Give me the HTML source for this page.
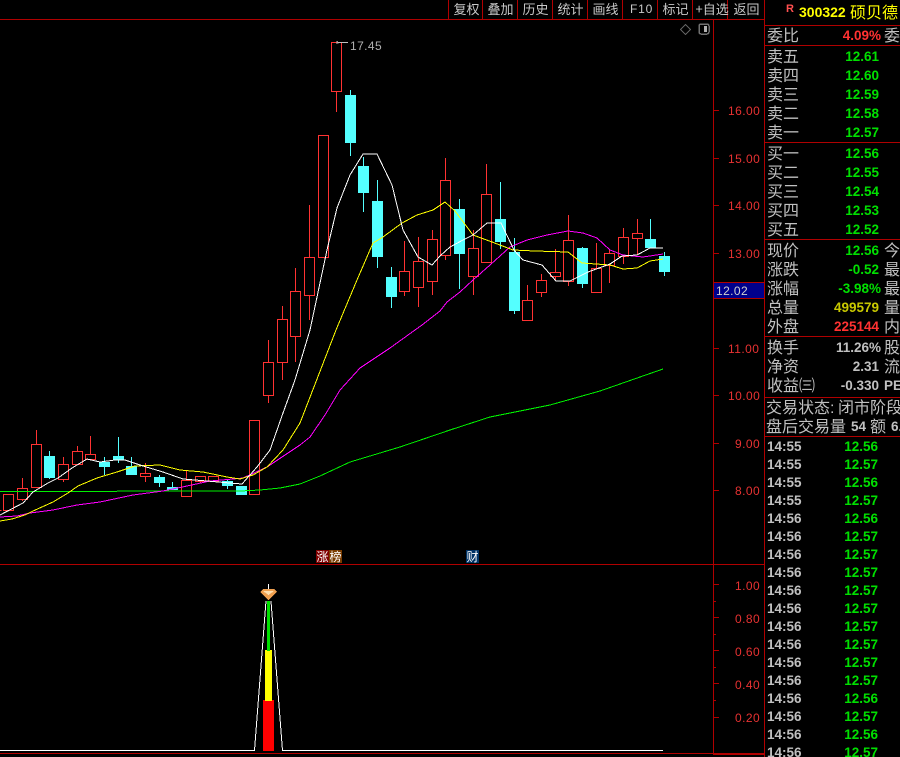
<!DOCTYPE html>
<html><head><meta charset="utf-8"><style>
html,body{margin:0;padding:0;background:#000;width:900px;height:757px;overflow:hidden}
svg{display:block}
.l{stroke:#b00000;stroke-width:1;fill:none}
text{font-family:"Liberation Sans","WenQuanYi Zen Hei",sans-serif}
.c{font-family:"WenQuanYi Zen Hei","Noto Sans CJK SC",sans-serif;font-size:16px;fill:#c0c0c0}
.b{font-size:13.5px;font-weight:bold;text-anchor:end;fill:#00e000}
.g{fill:#c0c0c0}.t{font-size:13.5px;font-weight:bold;fill:#c0c0c0}
.a{font-size:12px;fill:#e83232;letter-spacing:.45px}
.m{font-family:"WenQuanYi Zen Hei","Noto Sans CJK SC",sans-serif;font-size:13px;fill:#c8c8c8}
</style></head><body>
<svg width="900" height="757" viewBox="0 0 900 757" xmlns="http://www.w3.org/2000/svg">
<rect width="900" height="757" fill="#000"/>
<g shape-rendering="crispEdges">
<path class="l" d="M0 19.5H764.5M448.5 0V19M482.5 0V19M517.5 0V19M552.5 0V19M587.5 0V19M622.5 0V19M657.5 0V19M692.5 0V19M727.5 0V19M764.5 0V757M713.5 19V753M0 564.5H764M0 753.5H764M713 754.5H764M765 25.5H900M765 45.5H900M765 142.5H900M765 239.5H900M765 336.5H900M765 397.5H900M765 436.5H900"/>
<path class="l" d="M714 110.5h5M714 158.5h5M714 205.5h5M714 253.5h5M714 348.5h5M714 395.5h5M714 443.5h5M714 490.5h5M714 584.5h5M714 601.5h2M714 617.5h5M714 634.5h2M714 650.5h5M714 667.5h2M714 683.5h5M714 700.5h2M714 717.5h5"/>
<rect x="714" y="283" width="50" height="15" fill="#00008c"/>
<path d="M713.5 282.5H764M713.5 298.5H764" stroke="#b00000" fill="none"/>
<!-- red candles -->
<path fill="none" stroke="#ff3232" d="M0 510.5H1.5
M3.5 494.5h10v16h-10z
M17.5 488.5h10v11h-10zM22.5 478V488M22.5 500V501
M31.5 444.5h10v43h-10zM36.5 430V444
M58.5 464.5h10v15h-10zM63.5 457V464M63.5 480V482
M72.5 451.5h10v13h-10zM77.5 446V451
M85.5 454.5h10v5h-10zM90.5 436V454
M140.5 473.5h10v3h-10zM145.5 463V473M145.5 477V482
M181.5 480.5h10v16h-10zM186.5 470V480
M195.5 476.5h10v5h-10zM200.5 482V483
M208.5 476.5h10v5h-10z
M249.5 420.5h10v74h-10z
M263.5 362.5h10v33h-10zM268.5 340V362M268.5 396V403
M277.5 319.5h10v43h-10zM282.5 306V319M282.5 363V380
M290.5 291.5h10v45h-10zM295.5 268V291M295.5 337V362
M304.5 257.5h10v38h-10zM309.5 205V257M309.5 296V320
M318.5 135.5h10v122h-10z
M331.5 42.5h10v49h-10zM336.5 92V112
M399.5 271.5h10v20h-10zM404.5 241V271M404.5 292V296
M413.5 261.5h10v26h-10zM418.5 237V261M418.5 288V307
M427.5 239.5h10v42h-10zM432.5 230V239M432.5 282V295
M440.5 180.5h10v75h-10zM445.5 158V180M445.5 256V260
M468.5 248.5h10v28h-10zM473.5 230V248M473.5 277V295
M481.5 194.5h10v68h-10zM486.5 164V194
M522.5 300.5h10v20h-10zM527.5 285V300
M536.5 280.5h10v12h-10zM541.5 274V280M541.5 293V297
M550.5 272.5h10v4h-10zM555.5 249V272M555.5 277V281
M563.5 240.5h10v41h-10zM568.5 215V240M568.5 282V286
M591.5 268.5h10v24h-10zM596.5 243V268
M604.5 253.5h10v12h-10zM609.5 250V253M609.5 266V283
M618.5 237.5h10v19h-10zM623.5 228V237M623.5 257V264
M632.5 233.5h10v5h-10zM637.5 219V233M637.5 239V255"/>
<!-- cyan candles -->
<g fill="#54ffff">
<rect x="44" y="456" width="11" height="22"/>
<rect x="99" y="462" width="11" height="5"/>
<rect x="113" y="456" width="11" height="4"/>
<rect x="126" y="466" width="11" height="9"/>
<rect x="154" y="477" width="11" height="6"/>
<rect x="167" y="487" width="11" height="3"/>
<rect x="222" y="481" width="11" height="5"/>
<rect x="236" y="486" width="11" height="9"/>
<rect x="345" y="95" width="11" height="48"/>
<rect x="358" y="166" width="11" height="27"/>
<rect x="372" y="201" width="11" height="56"/>
<rect x="386" y="277" width="11" height="20"/>
<rect x="454" y="209" width="11" height="45"/>
<rect x="495" y="219" width="11" height="23"/>
<rect x="509" y="252" width="11" height="59"/>
<rect x="577" y="248" width="11" height="36"/>
<rect x="645" y="239" width="11" height="9"/>
<rect x="659" y="256" width="11" height="16"/>
</g>
<path fill="none" stroke="#54ffff" d="M49.5 451V479M104.5 457V475M118.5 437V463M131.5 457V466M159.5 475V487M172.5 482V487M227.5 479V489M350.5 90V156M363.5 157V212M377.5 180V268M391.5 267V308M459.5 199V289M500.5 182V249M514.5 238V314M582.5 247V288M650.5 219V239M664.5 252V276"/>
<!-- MA -->
<polyline fill="none" stroke="#00f000" points="0,491.5 240,491 260,490 280,488 300,484 320,476 350,462 400,447 450,430 490,417 550,405 600,391 640,377 663,369"/>
<polyline fill="none" stroke="#ff00ff" points="0,517 17,516 30,513 53,510 77,505 100,502 133,495 163,491 187,486 210,481 233,479 243,478 267,467 300,445 310,437 325,415 340,390 360,368 390,348 415,330 422,325 440,311 447,302 460,292 473,280 490,265 510,247 527,240 547,235 568,231 583,233 597,238 610,250 623,255 643,257 663,254"/>
<polyline fill="none" stroke="#ffff00" points="0,521 12,519 25,515 33,511 53,502 68,493 78,486 97,478 117,472 135,466 160,465 180,470 203,472 227,477 240,479 253,475 267,467 283,450 300,423 336,330 357,280 373,243 383,237 402,223 417,215 433,210 445,202 455,211 473,235 492,242 513,250 535,251 568,252 582,263 610,265 623,269 637,268 650,261 663,259"/>
<polyline fill="none" stroke="#ffffff" points="0,515 23,503 33,492 48,483 58,478 72,468 87,459 100,462 115,460 125,460 143,466 163,472 183,479 207,481 230,483 242,484 257,467 270,450 283,413 295,380 310,330 327,250 337,208 350,175 363,154 377,154 392,185 403,230 418,257 432,265 440,256 450,247 463,240 473,235 487,223 501,223 514,250 523,260 542,265 556,281 570,281 588,272 610,264 622,256 637,255 650,248 663,248"/>
<path fill="none" stroke="#c0c0c0" d="M337 41.5l2 1.5M339 42.5h9M337 41v3"/>
<!-- indicator -->
<path fill="none" stroke="#fff" d="M0 750.5H254.5L266 601M271 601L282.5 750.5H663M268.5 584V590"/>
<rect x="263" y="700" width="11" height="51" fill="#ff0000"/>
<rect x="265" y="650" width="7" height="51" fill="#ffff00"/>
<rect x="267" y="601" width="3" height="50" fill="#00e000"/>
<path d="M260 592l3-3h11l3 3-8.500 8z" fill="#f0a050"/>
<path d="M263 591h11l-5.500 4z" fill="#ffe0b0"/>
<!-- header icons -->
<path fill="none" stroke="#606060" d="M685.500 24.500l5 5-5 5-5-5z"/>
<rect x="699" y="24" width="10" height="10" rx="2" fill="none" stroke="#707070" stroke-width="1.500"/>
<rect x="704" y="26" width="3" height="6" fill="#b0b0b0"/>
<!-- signals -->
<rect x="316" y="550" width="13" height="13" fill="#800000"/>
<rect x="329" y="550" width="13" height="13" fill="#7a3c00"/>
<rect x="466" y="550" width="13" height="13" fill="#003366"/>
</g>
<text x="350" y="50" font-size="12" letter-spacing=".4" fill="#b0b0b0">17.45</text>
<text class="m" style="font-size:12px;fill:#fff" x="316.500" y="561">涨</text>
<text class="m" style="font-size:12px;fill:#fff" x="329.500" y="561">榜</text>
<text class="m" style="font-size:12px;fill:#fff" x="466.500" y="561">财</text>
<!-- topbar -->
<text class="m" x="453.500" y="14">复权</text>
<text class="m" x="487.500" y="14">叠加</text>
<text class="m" x="522.500" y="14">历史</text>
<text class="m" x="557.500" y="14">统计</text>
<text class="m" x="592.500" y="14">画线</text>
<text x="630" y="13" font-size="12" letter-spacing=".8" fill="#c8c8c8">F10</text>
<text class="m" x="662.500" y="14">标记</text>
<text class="m" x="695.500" y="14">+自选</text>
<text class="m" x="733.500" y="14">返回</text>
<!-- axis -->
<g class="a">
<text x="728" y="115">16.00</text><text x="728" y="163">15.00</text><text x="728" y="210">14.00</text><text x="728" y="258">13.00</text>
<text x="728" y="353">11.00</text><text x="728" y="400">10.00</text><text x="735" y="448">9.00</text><text x="735" y="495">8.00</text>
<text x="735" y="590">1.00</text><text x="735" y="623">0.80</text><text x="735" y="656">0.60</text><text x="735" y="689">0.40</text><text x="735" y="722">0.20</text>
</g>
<text x="716" y="295" font-size="12" letter-spacing=".4" fill="#d0d0d0">12.02</text>
<!-- panel head -->
<text x="786" y="12" font-size="11" font-weight="bold" fill="#ff5050">R</text>
<text x="799" y="17" font-size="14" font-weight="bold" fill="#ffff00">300322</text>
<text class="c" style="fill:#ffff00" x="850" y="18">硕贝德</text>
<g class="c">
<text x="767" y="41">委比</text><text x="884" y="41">委</text>
<text x="767" y="62">卖五</text><text x="767" y="81">卖四</text><text x="767" y="100">卖三</text><text x="767" y="119">卖二</text><text x="767" y="138">卖一</text>
<text x="767" y="159">买一</text><text x="767" y="178">买二</text><text x="767" y="197">买三</text><text x="767" y="216">买四</text><text x="767" y="235">买五</text>
<text x="767" y="256">现价</text><text x="767" y="275">涨跌</text><text x="767" y="294">涨幅</text><text x="767" y="313">总量</text><text x="767" y="332">外盘</text>
<text x="884" y="256">今</text><text x="884" y="275">最</text><text x="884" y="294">最</text><text x="884" y="313">量</text><text x="884" y="332">内</text>
<text x="767" y="353">换手</text><text x="767" y="372">净资</text><text x="767" y="391">收益㈢</text>
<text x="884" y="353">股</text><text x="884" y="372">流</text>
<text x="766" y="413">交易状态:</text><text x="838" y="413">闭市阶段</text>
<text x="766" y="432">盘后交易量</text><text x="870" y="432">额</text>
</g>
<text x="884" y="390" font-size="13.500" font-weight="bold" fill="#c0c0c0">PE</text>
<text x="851" y="431" font-size="13.500" font-weight="bold" fill="#c0c0c0">54</text>
<text x="891" y="431" font-size="13.500" font-weight="bold" fill="#c0c0c0">6.</text>
<g class="b">
<text x="881" y="40" style="fill:#ff3232">4.09%</text>
<text x="879" y="61">12.61</text><text x="879" y="80">12.60</text><text x="879" y="99">12.59</text><text x="879" y="118">12.58</text><text x="879" y="137">12.57</text>
<text x="879" y="158">12.56</text><text x="879" y="177">12.55</text><text x="879" y="196">12.54</text><text x="879" y="215">12.53</text><text x="879" y="234">12.52</text>
<text x="879" y="255">12.56</text><text x="879" y="274">-0.52</text><text x="881" y="293">-3.98%</text>
<text x="879" y="312" style="fill:#c8c800">499579</text><text x="879" y="331" style="fill:#ff3232">225144</text>
<text x="881" y="352" style="fill:#c0c0c0">11.26%</text><text x="879" y="371" style="fill:#c0c0c0">2.31</text><text x="879" y="390" style="fill:#c0c0c0">-0.330</text>
</g>
<g class="t">
<text x="767" y="451">14:55</text><text x="767" y="469">14:55</text><text x="767" y="487">14:55</text><text x="767" y="505">14:55</text>
<text x="767" y="523">14:56</text><text x="767" y="541">14:56</text><text x="767" y="559">14:56</text><text x="767" y="577">14:56</text><text x="767" y="595">14:56</text><text x="767" y="613">14:56</text><text x="767" y="631">14:56</text><text x="767" y="649">14:56</text><text x="767" y="667">14:56</text><text x="767" y="685">14:56</text><text x="767" y="703">14:56</text><text x="767" y="721">14:56</text><text x="767" y="739">14:56</text><text x="767" y="757">14:56</text>
</g>
<g class="b">
<text x="878" y="451">12.56</text><text x="878" y="469">12.57</text><text x="878" y="487">12.56</text><text x="878" y="505">12.57</text><text x="878" y="523">12.56</text><text x="878" y="541">12.57</text><text x="878" y="559">12.57</text><text x="878" y="577">12.57</text><text x="878" y="595">12.57</text><text x="878" y="613">12.57</text><text x="878" y="631">12.57</text><text x="878" y="649">12.57</text><text x="878" y="667">12.57</text><text x="878" y="685">12.57</text><text x="878" y="703">12.56</text><text x="878" y="721">12.57</text><text x="878" y="739">12.56</text><text x="878" y="757">12.57</text>
</g>
</svg>
</body></html>
